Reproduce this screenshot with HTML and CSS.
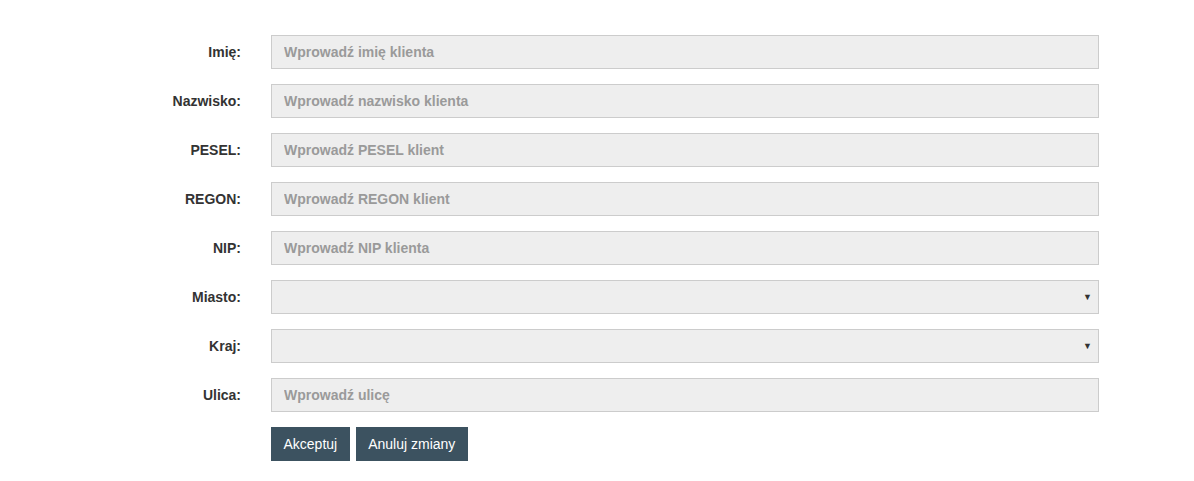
FILE: index.html
```html
<!DOCTYPE html>
<html lang="pl">
<head>
<meta charset="utf-8">
<title>Klient</title>
<link rel="stylesheet" href="styles.css">
</head>
<body>
<form class="form">
  <div class="row"><label class="lbl">Imię:</label><input class="field" placeholder="Wprowadź imię klienta"></div>
  <div class="row"><label class="lbl">Nazwisko:</label><input class="field" placeholder="Wprowadź nazwisko klienta"></div>
  <div class="row"><label class="lbl">PESEL:</label><input class="field" placeholder="Wprowadź PESEL klient"></div>
  <div class="row"><label class="lbl">REGON:</label><input class="field" placeholder="Wprowadź REGON klient"></div>
  <div class="row"><label class="lbl">NIP:</label><input class="field" placeholder="Wprowadź NIP klienta"></div>
  <div class="row"><label class="lbl">Miasto:</label><div class="field select"><span class="arrow">▼</span></div></div>
  <div class="row"><label class="lbl">Kraj:</label><div class="field select"><span class="arrow">▼</span></div></div>
  <div class="row"><label class="lbl">Ulica:</label><input class="field" placeholder="Wprowadź ulicę"></div>
  <div class="row buttons"><span class="lbl"></span><div class="btns"><button type="button" class="btn">Akceptuj</button><button type="button" class="btn">Anuluj zmiany</button></div></div>
</form>
</body>
</html>
```
FILE: styles.css
```css
html, body {
  margin: 0;
  padding: 0;
  background: #fff;
  font-family: "Liberation Sans", Arial, sans-serif;
  font-size: 14px;
}
.form {
  display: flex;
  flex-direction: column;
  gap: 15px;
  padding-top: 35px;
}
.row {
  display: flex;
  align-items: center;
  gap: 30px;
}
.lbl {
  width: 241px;
  flex: none;
  text-align: right;
  font-weight: bold;
  color: #333;
  font-size: 14px;
}
.field {
  box-sizing: border-box;
  width: 828px;
  height: 34px;
  margin: 0;
  padding: 0 12px;
  background: #eeeeee;
  border: 1px solid #cccccc;
  border-radius: 0;
  font-family: "Liberation Sans", Arial, sans-serif;
  font-size: 14px;
  font-weight: bold;
  color: #555;
  outline: none;
}
.field::placeholder {
  color: #9a9a9a;
  font-weight: bold;
}
.select {
  display: flex;
  align-items: center;
  justify-content: flex-end;
  padding: 0 6px;
}
.arrow {
  font-size: 9px;
  color: #333;
}
.btns {
  display: flex;
  gap: 6px;
}
.btn {
  box-sizing: border-box;
  height: 34px;
  padding: 0 12.5px;
  border: none;
  border-radius: 0;
  background: #3c5260;
  color: #fff;
  font-family: "Liberation Sans", Arial, sans-serif;
  font-size: 14px;
}
```
